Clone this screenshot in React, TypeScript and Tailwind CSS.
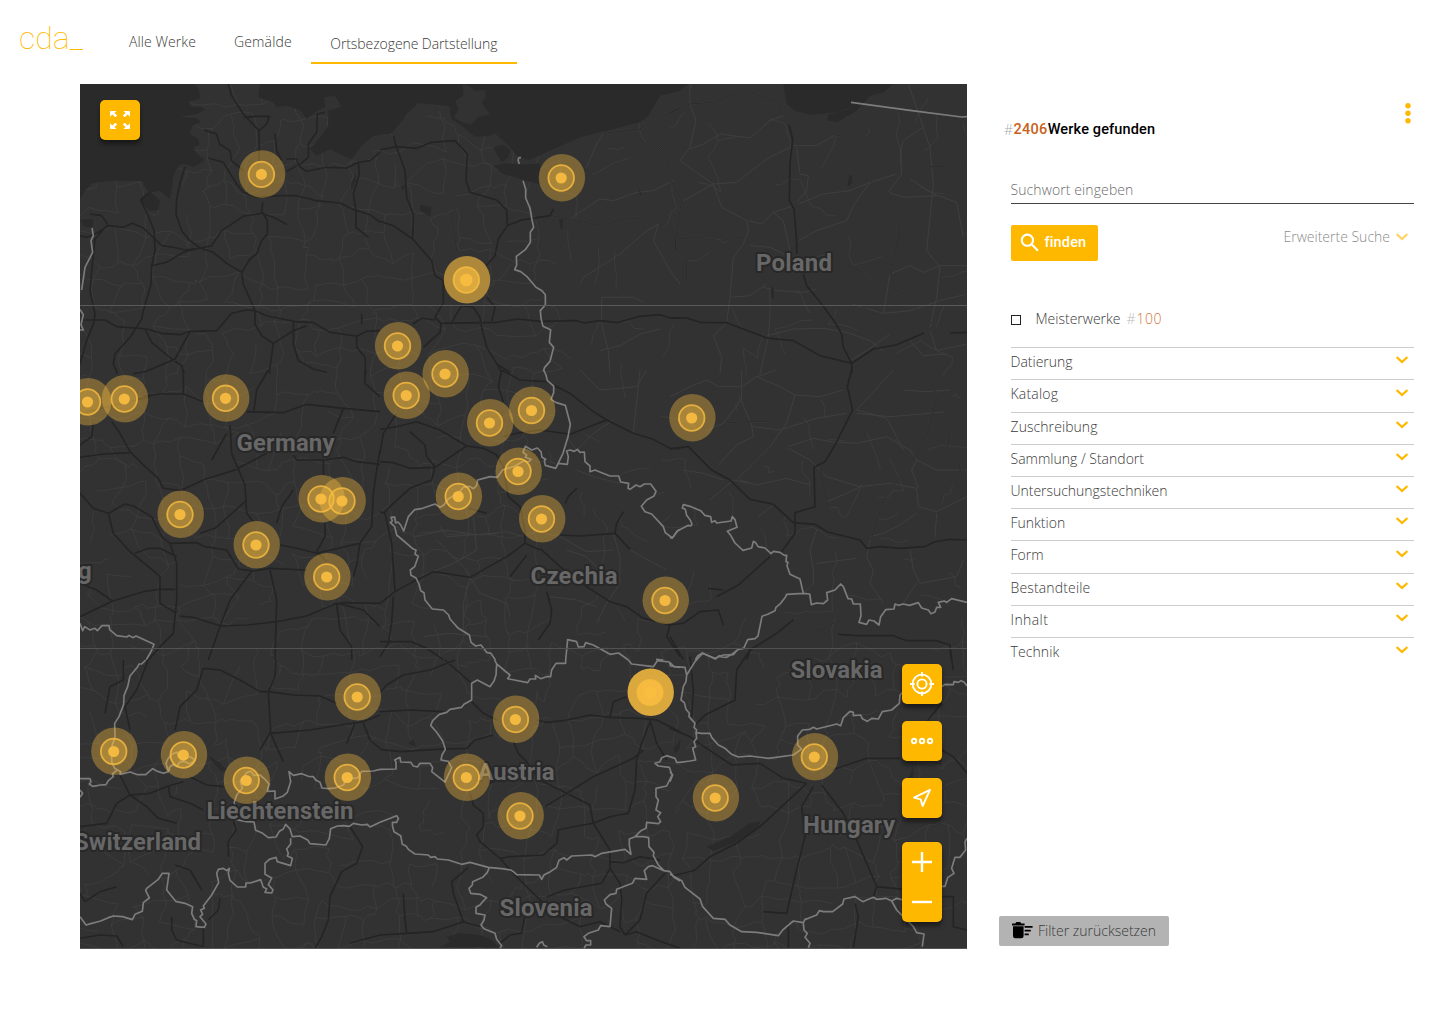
import type { ReactNode } from "react";

type Tile = { x: number; y: number; d: string };

const BORDERS: Tile[] = [
  { x: 80, y: 84, d: "M36 432L40 455 33 470 38 505 15 550 5 618M0 676L10 692 3 722 10 738 0 738" },
  { x: 380, y: 84, d: "M418 240L414 228 417 221 423 221M429 290L437 315 437 342 450 372 456 408 461 430 451 445 451 475 436 497 409 517 410 543 404 557 422 563 440 577 468 610 486 620 496 632 496 663 481 680 483 703 489 727 512 737 508 775 521 790 510 832 494 850 490 862" },
  { x: 670, y: 84, d: "M543 55L720 79 875 99 891 98" },
  { x: 80, y: 370, d: "M0 760L8 782 14 770 30 780 45 775 52 782 66 767 87 767 89 779 110 797 140 801 147 796 158 803 168 798 222 823 214 843 199 869" },
  { x: 380, y: 370, d: "M491 0L498 15 502 32 521 48 521 68 513 88 527 97 556 106 571 163 564 200 549 250 527 295 496 286 493 272 497 268 486 262 483 245 472 234 455 240 436 229 429 247 440 255 436 262 453 268 446 276 430 273 405 288 368 300 352 322 330 320 308 326 293 330 290 347 280 356 268 349 250 352 235 370 205 386 192 405 180 412 165 402 128 415 104 419 85 440 71 483 62 465 54 456 47 459 44 441 33 442 37 453 31 458 44 470 50 495 75 516 98 536 108 540 105 552 115 559 104 590 91 600 93 616 108 624 117 642 122 662 132 668 135 690 157 717 190 720 206 735 210 747 235 775 268 795 273 817 287 828 303 825 320 847 333 850 346 870M527 295L535 280 562 283 565 260 560 243 570 240 583 244 592 238 600 247 613 246 615 275 630 288 630 305 645 300 665 308 690 318 716 318 722 336 746 340 744 355 750 358 768 345 780 350 793 342 812 342 828 364 822 378 800 390 784 409 795 425 815 432 850 470 856 488 877 504 892 483 900 478M557 870L563 809 590 815 595 831 612 830 617 818 640 825 690 853 716 849 745 870M828 868L850 870" },
  { x: 670, y: 370, d: "M0 505L10 500 22 483 55 466 62 468 66 462 60 449 50 436 46 418 37 414 40 404 60 409 92 422 104 436 122 440 125 457 135 452 140 459 183 453 187 440 195 449 201 472 172 484 182 496 195 519 219 541 245 534 250 514 257 518 264 530 285 534 303 551 310 544 330 547 343 556 350 556 348 575 354 577 351 587 360 613 390 627 400 670M400 670L350 673 347 680 332 700 318 712 315 722 295 732 276 739 264 798 255 806 233 809 221 835 205 838 185 853 170 862 155 861 148 857 136 867 97 849 84 857 76 869M400 670L419 672 424 704 440 699 460 701 473 690 470 668 495 660 512 642 520 650 534 686 545 687 550 702 571 702 573 737 567 757 590 763 597 750 612 753 627 765 632 740 647 719 672 717 675 702 685 706 700 702 718 706 745 698 755 714 775 720 783 731 795 726 800 712 812 712 805 697 823 693 830 697 845 686 891 697" },
  { x: 80, y: 660, d: "M197 0L185 12 177 12 172 22 150 48 143 80 132 107 131 133 117 170 104 190 105 230 95 262 95 305 104 325 122 335 120 343 130 341 150 336 173 344 197 344 218 326 235 335 250 340 265 335 258 310 264 296 275 283 292 276 295 290 310 300 330 290 345 300 330 312 315 305 300 305 290 320 280 312 268 322 268 333M0 356L30 356 33 366 28 372 38 379 62 375 78 374 85 362 100 350 97 342 110 331M0 390L8 400 0 412M462 430L470 405 487 385 481 362 500 338 512 334 522 346 540 345 555 358 567 372 562 394 585 393 585 417 608 409 622 397 632 365 627 335 640 346 665 341 685 349 700 350 707 360 720 367 726 384 745 386 765 384 790 375 800 357 833 354 845 334 880 333 900 328M462 430L470 445 465 478 500 485 522 486 527 511 545 518 565 533 588 531 598 514 610 507 617 493 630 507 637 530 660 528 683 540 690 551 738 555 748 535 752 506 772 498 790 497 808 499 820 490 845 495 862 493 870 501 900 487M632 535L632 552 620 567 625 580 622 588 637 595 632 617 592 605 588 592 568 598 555 610 555 643 575 654 565 674 579 690 575 699 555 697 560 686 550 682 542 659 512 669 498 669 497 681 472 681 450 661 445 640 448 625 440 632 430 625 415 628 410 640 416 668 395 705 370 738 373 745 362 750 368 763 360 770 378 792 373 802 348 800 350 782 343 778 335 760 338 740 315 730 287 724 260 690 267 640 247 640 235 658 200 685 197 692 208 714 190 728 187 754 165 763 157 779 128 770 100 768 85 773 62 783 35 790 18 795 0 770" },
  { x: 380, y: 660, d: "M0 328L48 327 48 305 44 300 60 292 62 306 92 307 100 318 112 321 120 310 150 310 158 323 155 335 195 366 215 323 205 304 183 300 186 285 196 268 188 243 170 217 152 196 158 182 178 163 200 157 210 148 245 142 252 133 275 120 275 70 292 60 330 80 342 63 348 45 350 12 390 45 383 56 443 68 450 57 467 57 466 46 482 56 500 50 512 50 515 30 528 10 557 10 557 0M344 0L350 12M745 0L755 12 820 20 832 2 868 6 872 18 900 22M0 487L50 467 55 475 50 487 37 487 38 500 42 515 62 527 67 553 78 558 85 568 105 582 145 585 152 592 165 590 172 597 205 600 245 613 270 607 325 622 365 626 392 630 400 635 410 644 478 645 485 658 492 645 508 637 530 622 537 601 552 593 560 600 575 588 635 585 645 590 665 580 735 568 753 583 748 556 748 537 765 530 783 512 798 505 800 487 835 491 842 485 833 470 842 458 828 450 835 420 828 410 828 385 860 378 876 345 868 322 835 318 825 310 840 305 845 293 860 287 885 295 890 307 900 307M765 530L790 530 806 533 807 560 822 577 820 587 835 615 852 632 870 635 882 652 900 663M328 622L322 637 308 652 278 665 277 675 267 685 272 700 300 703 320 713 308 725 300 735 288 742 288 760 315 765 312 780 303 795 312 806 345 820 350 838 365 857 360 865M852 632L818 617 805 620 793 632 800 658 765 655 757 670 710 688 708 700 690 704 673 720 678 732 695 745 690 800 662 797 655 810 625 820 612 830 620 842 632 842 632 855 618 855 612 865M470 862L478 850 487 845 492 856 502 860" },
  { x: 670, y: 650, d: "M0 38L12 50 45 52 50 75 48 95 40 110 33 150 43 158 48 178 58 190 57 200 75 220 72 232 80 240 78 248 95 250 120 250 125 262 145 285 165 295 185 313 205 321 240 318 295 325 370 315 395 297 383 285 383 258 397 240 420 238 430 232 440 237 500 222 512 227 520 203 540 184 550 187 550 197 572 195 577 206 592 214 605 205 625 207 637 185 665 180 688 160 690 135 705 120 740 118M50 75L75 35 97 10 135 25 160 15 190 14 202 0M815 110L825 103 850 104 852 95 865 97 873 92 883 97 891 108M78 248L80 265 72 275 77 290 68 295 77 330 60 333 30 337M0 365L8 375 0 395M0 673L35 692 45 712 90 747 98 770 130 805 165 808 180 825 215 845 260 847 325 857 340 838 370 813 400 818 405 808 415 805 440 795 448 782 460 785 488 785 518 762 522 747 555 740 578 755 610 742 620 748 648 745 665 753 680 745 700 750M665 753L680 780 700 800 730 830 740 848 762 852 757 890M400 818L402 840 412 850 405 862 420 880 415 893M815 709L825 709 833 683 852 670 845 655 855 622 870 622 887 600 885 575 891 565" },
];

const WATER: Tile[] = [
  { x: 80, y: 84, d: "M0 0L345 0 358 20 360 42 325 55 335 70 365 68 375 78 350 90 300 98 350 103 362 115 335 125 330 150 355 165 358 182 340 190 350 210 375 228 340 250 315 240 298 242 280 275 275 320 270 345 240 320 215 325 240 350 235 378 210 380 185 360 180 345 205 325 185 290 90 290 35 298 15 320 0 345ZM540 0L535 40 580 55 590 70 620 65 660 78 680 105 700 90 712 80 735 70 732 40 765 35 785 68 745 80 745 125 720 160 690 195 710 215 750 195 790 215 815 225 850 180 880 155 902 153L902 0ZM0 408L40 405 38 430 15 430ZM812 300L828 268 828 290 815 318Z" },
  { x: 380, y: 84, d: "M0 0L900 0 900 20 840 35 805 95 780 115 700 135 600 160 500 205 450 228 415 218 380 180 345 148 330 155 285 158 250 130 215 105 205 65 115 58 85 85 70 105 35 148 0 152ZM340 245L375 238 420 242 480 238 480 300 440 290 370 270ZM340 190L370 182 390 195 385 220 365 235 350 210ZM120 362L155 370 150 400 120 378ZM538 405L550 405 547 438 540 430ZM62 310L75 300 70 320ZM775 310L785 332 780 332Z" },
  { x: 670, y: 84, d: "M340 0L610 0 580 40 545 70 500 85 420 92 375 80 350 60ZM0 0L55 0 30 18 0 22ZM590 0L670 0 640 25 600 35 560 80 500 115 472 108 475 92 540 75ZM538 275L545 272 547 295 532 310ZM303 605L312 615 312 645 303 640Z" },
  { x: 670, y: 650, d: "M108 590L140 578 180 560 240 520 270 515 265 535 200 575 130 603ZM10 295L32 272 20 310ZM712 390L730 350 730 385Z" },
  { x: 380, y: 660, d: "M200 830L240 820 300 825 335 840 355 862 180 862 210 845ZM85 250L100 238 108 262ZM880 280L900 240 900 265Z" },
  { x: 80, y: 660, d: "M385 285L420 310 440 330 425 335 400 310Z" },
];

const ISLANDS: Tile[] = [
  { x: 380, y: 84, d: "M248 0L265 5 285 20 315 18 318 40 305 55 330 92 295 98 272 122 240 112 222 100 235 75 225 50 250 35ZM85 85L115 62 205 66 215 80 180 78 130 98 85 118Z" },
];

const ROADS: Tile[] = [
  { x: 80, y: 84, d: "M445 0L455 35 490 90 537 140 538 200 535 260M492 100L530 97 568 97 560 120 537 140M0 455L20 460 50 448 85 425 130 430 157 418 190 432 225 465 245 485 280 490 315 498 360 492 395 485 425 440 490 397 545 388 548 355M30 390L65 395 85 425M205 328L182 348 202 388 222 440 225 500 215 545 213 600 190 680 185 705 150 760 105 810 100 840 112 869M315 248L302 290 290 345 288 390 305 440 330 470 360 492 400 505 440 538 485 565 510 525 530 510 545 470 562 450 562 410 548 385M215 545L260 535 310 505 360 492M485 565L490 600 510 645 525 680 525 720 545 755 580 778 570 850 568 869M80 425L45 465 35 560 30 620 45 690 42 715 20 770 0 840M10 708L75 708 110 728 200 735 245 748 300 752 330 742 410 740 455 688 500 678 525 680 560 695 640 712 700 716 750 745 830 757 860 742 900 740M195 735L215 775 275 825 305 845 312 869M330 742L285 825 200 862 160 869M372 138L410 150 418 180 450 200 455 230 490 260M385 222L430 235 470 300 490 325 530 340 600 335 650 335 710 350 780 357 825 378 870 392 900 415M618 225L650 225 655 245 680 262 740 250 800 252 835 235 870 230 900 205M655 245L685 220 685 180 710 145 712 90 735 85M835 235L838 270 820 330 828 380 828 430 865 460M545 388L580 400 622 422M585 148L590 200 605 230M580 778L640 740 680 725M640 712L640 780 655 830 700 855 740 865M830 757L830 790 855 820 857 869M620 262L650 245M845 690L845 720" },
  { x: 380, y: 84, d: "M0 197L50 188 110 193 155 175 225 170 262 210 258 290 270 325 350 348 380 378 382 425 355 465 345 515 315 550M40 155L50 190 75 260 80 340 100 390 98 465 155 530 165 575 190 590 190 655 165 700 183 718 180 745 130 790M0 412L40 425 98 465M382 425L425 408 510 395 520 375M98 720L125 703 165 708M183 718L350 715 415 705 480 712 590 710 612 717 660 710 710 716 780 697 840 692 870 702 900 702M215 715L245 665 280 670 300 700 305 730 320 790 345 830 365 865M320 640L345 670 335 712M350 840L390 865" },
  { x: 670, y: 84, d: "M357 122L368 165 360 240 358 350 372 375 380 470 380 510M400 570L410 605 455 660 495 715 515 750 520 790 545 838 545 869M0 702L50 702 90 715 170 716 290 762 370 770 450 815 545 838 610 795 680 782 762 747M840 747L891 745" },
  { x: 80, y: 370, d: "M0 262L70 252 150 248M0 225L35 200 40 160M95 155L120 190 150 245 195 290 235 325 250 355 300 362 375 328 465 300 560 250M440 190L395 270M190 78L240 72 310 72 370 95M310 0L310 72M565 0L530 60 522 120M450 165L455 250 495 345 500 430 520 455M500 125L610 128 680 103 790 115 900 125M790 115L760 190M640 255L650 270 730 270 790 262 830 275 900 283M730 270L730 315M495 395L450 435 405 475 360 490M0 370L40 415 85 430 135 402 160 408 215 440 245 500 270 520 350 518 375 530 440 540 475 597 520 603 570 595 680 600M85 430L100 490 150 545 205 590 240 620 240 700 290 730M270 520L290 580 290 690 280 790 250 820 205 870M290 560L240 535 205 535 165 550M515 603L450 690 422 765 385 870M300 738L340 742 422 768 500 765 590 755 680 738 770 700M570 600L590 690 585 870M770 700L780 780 815 830 815 870M770 700L850 720 900 770M780 698L900 700M600 525L650 535 710 550 840 520M735 460L735 500 710 545 740 575M820 620L830 585 840 520 875 470 880 370 890 300 900 240M0 740L100 692 190 665 240 658 285 658M0 640L50 660 100 695M640 360L605 410 590 460M855 0L855 40 900 80M210 80L0 130" },
  { x: 380, y: 370, d: "M0 178L50 170 110 155 180 180 260 228 310 235 350 255 370 290M0 275L40 278 90 295 165 292M90 185L135 225 140 260 165 290 155 330 90 355 40 400 10 430M165 292L260 228M370 290L385 380 420 410 435 480 435 520 480 540M370 200L410 190 480 180 570 193 680 150M365 0L355 50 370 95M365 0L420 30 500 35 570 70 640 125 680 150 760 190 820 208 870 235 900 235M540 495L600 498 705 490 750 538M705 490L710 460 730 425M555 400L565 380 590 355M480 535L540 590 620 650 690 695 740 710 790 745 870 765 860 800 900 860M435 520L380 560 270 622 160 605 100 635 45 665 0 700M45 665L35 520 15 430 0 425M40 680L35 760 25 820M0 815L95 815 140 835 190 869M25 820L0 860M440 555L390 620M500 665L515 720 510 760 475 810M265 415L320 430M50 130L10 190 0 250" },
  { x: 670, y: 370, d: "M0 237L55 230 125 300 180 330 240 388 310 403 370 458 435 463 475 487 570 510 590 535 630 530 690 535 765 530 790 517 840 508 891 510M545 0L532 50 548 120 495 225 465 275 432 292 435 410 375 428 375 490 335 545M300 560L205 645 140 680M115 655L160 660M0 765L40 760 90 725 145 720 160 765M0 800L40 869M505 793L560 797 670 797 710 812 800 812 840 825 845 869M230 869L240 840 320 790 370 750" },
  { x: 80, y: 660, d: "M370 25L350 90 300 140 290 190 285 210M370 25L420 30 480 60 540 95 565 95 640 105 720 108 770 130M565 95L572 215 540 270M588 0L585 50 565 95M572 220L690 210 780 195 850 185 900 165M572 220L610 305M205 0L170 90 135 140 150 210M130 0L130 60 90 80 75 160M850 190L870 240 900 265M825 190L800 250M120 345L150 405 210 400 265 378 310 365M150 405L200 440 235 475 290 490M0 500L80 490 110 430 150 405M265 378L270 410 330 430 370 450M330 350L380 375 430 380M460 480L468 510 445 545 445 590M285 615L330 630 365 690M0 700L15 725 60 695 110 680M810 500L848 560 830 610 785 635 750 710 745 780 725 830 705 865M0 835L60 825 110 828 130 860M810 850L900 825M385 780L415 750 420 715M275 770L275 810 290 840 370 860M370 800L370 860" },
  { x: 380, y: 660, d: "M225 0L150 30 70 45 20 75 0 100M195 0L275 70 275 125 310 160 350 180M0 155L90 150 190 155M0 268L60 275 170 268 260 265 285 240 340 225M400 245L415 280 440 305 480 360 560 400 630 435 640 490 690 570 690 625 665 670 555 690 500 710M495 440L560 400 640 350 760 295 790 270M470 180L500 187 550 182 630 165 690 172 780 175 830 180 900 215M810 185L785 250 770 300 765 390 745 460 690 470 640 490 580 500 535 510 530 550 490 585 390 590 360 595 300 545 290 525 310 500 310 460 280 435 270 400M360 595L390 630 470 710 520 760 600 800 660 785 720 815M690 172L700 125 740 110M690 625L720 670 725 720 720 800 735 825M690 605L730 608 780 590 840 600M735 825L780 780 800 700 855 640M265 622L215 665 220 700 250 785 300 800M0 825L80 820 160 815 250 785M70 700L75 780 80 820M360 850L390 825 425 820 435 765M330 370L370 350 395 320M735 825L770 815 830 840 900 865M810 180L830 250 860 300" },
  { x: 670, y: 650, d: "M80 275L185 345 270 340 340 385 410 400M410 400L270 530 200 580 120 620 75 660 20 675 0 680M430 410L395 470 405 560 375 680 350 790 280 785M455 405L520 490 560 570 620 710 700 718M620 710L610 740M485 360L590 325 690 325M240 0L200 60 195 150 105 195 75 225M60 20L70 120 65 200M815 300L850 320 891 370M815 740L850 740 850 830 891 840M770 215L815 160M840 0L850 60M0 235L60 260 80 275M555 760L565 800 550 893M355 820L355 893" },
];

const LANES: Tile[] = [
  { x: 380, y: 84, d: "M515 395L580 408 660 425 720 410 780 400 840 420 880 440 890 500M780 135L860 215 870 270 895 300M670 148L780 135 900 72M495 410L540 485 570 550 600 600 650 635M250 335L215 390 230 500" },
  { x: 670, y: 84, d: "M0 85L60 60 130 55 220 20 270 35 330 55 330 90M360 75L362 95 450 140 510 155 545 180 570 250 600 290 655 325 685 390 690 440 660 560 680 625 790 722M510 155L580 100 710 5M0 285L35 350 20 440 15 490 50 530 50 590 25 660M20 465L110 458 220 460M470 615L520 630 560 655 615 693M520 538L580 565 630 612M710 280L760 250 850 245 891 220M790 750L830 720 890 630" },
  { x: 670, y: 370, d: "M825 120L840 180 832 235 865 270 880 350M770 0L800 80 770 200 730 270 640 390 605 500M170 158L240 155 300 155M450 290L460 340 470 400M375 740L430 785 470 770 530 740" },
];

const MINOR: Tile[] = [
  { x: 380, y: 84, d: "M570 405L660 345 700 350 770 325 820 320 880 290M600 600L610 580 720 510 800 440 835 420M835 420L820 470 870 560 900 600M665 640L665 720 685 800 690 869M665 640L760 640 790 655M660 800L720 785 780 750 840 735M620 250L650 180 670 150" },
  { x: 670, y: 84, d: "M60 0L60 60 78 110 60 190 30 230 130 300 200 295 290 225 360 190M60 195L100 180 150 150 240 162 300 110 340 95M130 300L155 370 230 410 235 440 220 480 190 520 180 640 170 715M40 350L130 300M385 470L440 440 530 410 550 365 600 295M385 360L460 330 540 320 600 295 680 270M715 0L760 130 780 190 790 300 770 500 810 550 800 640 780 730M690 205L700 170 760 130M690 205L695 270 655 325 700 340 800 335M720 285L790 330 860 355 880 460M370 185L440 185 500 150M380 190L390 270 415 275 410 320 380 355M235 410L275 420 310 385 370 365M310 385L340 410 360 500M280 610L320 620 400 625 440 615M300 610L300 700 295 760 270 869M180 640L240 635 290 600M545 660L640 688 720 680 810 650 891 630M640 690L660 570 720 545 760 565 810 545 891 545M240 485L300 490 350 515M170 716L130 755 155 820 150 869M290 755L370 735 460 733 530 745 600 770 640 800M540 830L590 800 660 750M780 740L800 800 891 780M720 770L760 815 830 810" },
  { x: 670, y: 370, d: "M0 80L60 50 110 30 145 50 215 50 260 20 320 0M215 0L215 90 160 160 110 180M215 95L245 165 250 200 200 225 145 285M260 20L330 50 375 75 450 80 520 60M375 75L350 160 300 230 200 330M250 170L330 180 440 145 530 130M355 230L430 205 480 215 560 220 650 200 720 240 740 270M560 120L650 145 700 240M560 120L670 0M560 130L660 140 780 130 830 125M355 235L420 270 470 320 570 350 660 340 740 355 745 410 800 425 891 380M570 350L530 370 470 395M740 270L725 300 745 355M740 270L800 300 891 300M700 60L770 65 840 60M210 330L260 345 350 325 420 345M40 300L100 310 160 330M265 440L310 405M120 390L190 330 240 340M600 510L590 560 610 600 600 640 640 700M720 540L730 600 750 640 860 620 880 570M740 640L700 700M800 430L795 500M440 480L420 540 430 600 430 640 400 670M440 580L520 570 560 565M600 500L640 490 690 465 740 430" },
  { x: 380, y: 370, d: "M560 200L590 240 640 190 700 150M600 0L660 60 770 50 800 0M780 0L760 190M590 300L640 320 720 340M110 500L190 480 300 495 380 485 430 500M180 470L200 500 350 490M170 510L260 600 270 622M270 622L250 700 250 780M270 622L300 670 380 700 390 740M540 500L620 545 700 540M700 490L720 560 720 640 680 700 650 760M750 540L860 600M560 540L620 560 700 640M120 620L220 580 290 540 280 440M510 680L590 690 650 710M130 800L210 790 320 800" },
];

const MARKERS: [number, number, number][] = [
  [261.4, 174.4, 0.37], [561.2, 178, 0.37], [397.5, 346, 0.37], [445, 374, 0.37], [406.2, 395.5, 0.37],
  [531.5, 410.5, 0.37], [489.5, 423, 0.37], [518, 471.5, 0.37], [458.2, 496.5, 0.37], [541.5, 519, 0.37],
  [665, 600.5, 0.37], [691.7, 418, 0.37], [87.5, 402, 0.37], [124.3, 399, 0.37], [225.5, 398.3, 0.37],
  [180, 514.5, 0.37], [256, 545, 0.37], [321, 499, 0.37], [342, 501, 0.37], [326.7, 577, 0.37],
  [357.2, 697, 0.37], [113.7, 751.5, 0.37], [183.3, 755, 0.37], [246.2, 780.5, 0.37], [347.2, 777.5, 0.37],
  [515.4, 719.5, 0.37], [466.3, 777.5, 0.37], [520, 816, 0.37], [814.3, 757, 0.37], [715.2, 798, 0.37],
  [466.3, 280, 0.62], [650, 692.5, 0.85],
];

const LABELS: [string, number, number, number][] = [
  ["Poland", 756, 271, 76], ["Germany", 236.5, 451, 98], ["Czechia", 530.5, 584, 87], ["Slovakia", 790.5, 678, 92],
  ["Austria", 477.5, 779.5, 77], ["Liechtenstein", 206.5, 819, 147], ["Switzerland", 74, 850, 127],
  ["Hungary", 803, 832.5, 92], ["Slovenia", 499.5, 916, 93], ["g", 78, 578.5, 13.5],
];

/* Deterministic mesh of country lanes that fills the space between the highways. */
function laneMesh() {
  let seed = 7;
  const rnd = () => {
    seed = (seed * 16807) % 2147483647;
    return seed / 2147483647;
  };
  const step = 23;
  const cols = 41;
  const rows = 40;
  const pts = Array.from({ length: rows }, (_, j) =>
    Array.from({ length: cols }, (_, i) => [70 + i * step + (rnd() - 0.5) * 19, 74 + j * step + (rnd() - 0.5) * 19]),
  );
  let d = "";
  const link = (a: number[], b: number[]) => {
    const sparse = a[0] > 545 && a[1] < 640;
    if (rnd() < (sparse ? 0.86 : 0.32)) return;
    d += `M${a[0].toFixed(1)} ${a[1].toFixed(1)}`;
    for (const t of [0.3, 0.65]) {
      const x = a[0] + (b[0] - a[0]) * t + (rnd() - 0.5) * 6;
      const y = a[1] + (b[1] - a[1]) * t + (rnd() - 0.5) * 6;
      d += `L${x.toFixed(1)} ${y.toFixed(1)}`;
    }
    d += `L${b[0].toFixed(1)} ${b[1].toFixed(1)}`;
  };
  for (let j = 0; j < rows - 1; j++)
    for (let i = 0; i < cols - 1; i++) {
      link(pts[j][i], pts[j][i + 1]);
      link(pts[j][i], pts[j + 1][i]);
    }
  return d;
}
const MESH = laneMesh();

function Layer({ tiles, ...rest }: { tiles: Tile[]; stroke?: string; strokeWidth?: number; fill?: string }) {
  return (
    <g strokeLinejoin="round" {...rest}>
      {tiles.map((t, i) => (
        <path key={i} d={t.d} transform={`translate(${t.x} ${t.y}) scale(.33333)`} />
      ))}
    </g>
  );
}

function MapCanvas() {
  return (
    <svg viewBox="80 84 887 865" className="block h-full w-full">
      <rect x="80" y="84" width="887" height="865" fill="#323232" />
      <path d={MESH} fill="none" stroke="#3d3d3d" strokeWidth="0.85" strokeLinejoin="round" />
      <Layer tiles={MINOR} fill="none" stroke="#3f3f3f" strokeWidth={2.8} />
      <Layer tiles={WATER} fill="#2a2a2a" />
      <Layer tiles={ISLANDS} fill="#323232" />
      <Layer tiles={LANES} fill="none" stroke="#3e3e3e" strokeWidth={4.5} />
      <Layer tiles={LANES} fill="none" stroke="#262626" strokeWidth={2.4} />
      <Layer tiles={ROADS} fill="none" stroke="#242424" strokeWidth={4.8} />
      <Layer tiles={BORDERS} fill="none" stroke="#7c7c7c" strokeWidth={5} />
      <path d="M80 305.5H967" stroke="#5a5a5a" />
      <path d="M80 648.5H967" stroke="#525252" />
      <g className="font-['Roboto',sans-serif] text-[24px] font-bold" fill="#676767" stroke="#282828" strokeWidth="4" strokeLinejoin="round" paintOrder="stroke">
        {LABELS.map(([t, x, y, w]) => (
          <text key={t} x={x} y={y} textLength={w}>{t}</text>
        ))}
      </g>
      {MARKERS.map(([x, y, o], i) => (
        <g key={i} fill="#f9bd40">
          <ellipse cx={x + 0.7} cy={y - 0.3} rx="23.2" ry="23.8" opacity={o} />
          <circle cx={x} cy={y} r="13" opacity={o} />
          <circle cx={x} cy={y} r="12.8" fill="none" stroke="#f9bd40" strokeWidth="1.8" opacity={o > 0.8 ? 0.5 : 0.8} />
          <circle cx={x} cy={y} r={o > 0.5 ? 6.3 : 5.6} opacity="0.92" />
        </g>
      ))}
      <path d="M80 948.7H967" stroke="#707070" strokeWidth="0.7" />
    </svg>
  );
}

function MapButton({ label, children }: { label: string; children: ReactNode }) {
  return (
    <button aria-label={label} className="flex size-10 items-center justify-center rounded-[5px] bg-[#ffb800] shadow-[0_4px_4px_rgba(0,0,0,0.45)]">
      {children}
    </button>
  );
}

function Chevron() {
  return (
    <svg viewBox="0 0 12 8" className="h-2 w-3 shrink-0">
      <path d="M0.6 1L6 6.1 11.4 1" fill="none" stroke="#ffb800" strokeWidth="2.2" />
    </svg>
  );
}

const FILTERS: [string, string][] = [
  ["Datierung", ""], ["Katalog", "tracking-[0.2px]"], ["Zuschreibung", "tracking-[0.07px]"], ["Sammlung / Standort", ""],
  ["Untersuchungstechniken", "tracking-[-0.03px]"], ["Funktion", ""], ["Form", ""], ["Bestandteile", "tracking-[0.15px]"],
  ["Inhalt", "tracking-[0.4px]"], ["Technik", "tracking-[0.1px]"],
];

export default function App() {
  return (
    <div className="flex h-[1024px] w-[1440px] flex-col overflow-hidden bg-white font-['Open_Sans',sans-serif] text-[14px] leading-5 font-light text-[#3a3a3a]">
      <header className="flex h-[84px] items-start">
        <div className="mt-[18px] ml-[19px] w-[93px] font-['Roboto',sans-serif] text-[32px] leading-10 font-thin text-[#ffb800]">cda_</div>
        <nav className="flex items-start">
          <a className="mt-8 ml-[17px] tracking-[0.08px]">Alle Werke</a>
          <a className="mt-8 ml-[38px] tracking-[0.15px]">Gemälde</a>
          <a className="ml-[19px] flex h-[64px] w-[206px] justify-center border-b-2 border-[#ffb800] pt-[34px] tracking-[-0.08px]">Ortsbezogene Dartstellung</a>
        </nav>
      </header>

      <main className="flex">
        <section className="relative ml-20 h-[865px] w-[887px] overflow-hidden">
          <MapCanvas />
          <div className="absolute top-4 left-5">
            <MapButton label="Vollbild">
              <svg viewBox="0 0 20 20" className="size-5" fill="#fff">
                <path d="M0 1h6.4L4.5 2.9 7.2 5.6 5.4 7.2 2.3 4.6 0 6.8z" />
                <path d="M20 1h-6.4l1.9 1.9-2.7 2.7 1.8 1.6 3.1-2.6L20 6.8z" />
                <path d="M0 19h6.4l-1.9-1.9 2.7-2.7-1.8-1.6-3.1 2.6L0 13.2z" />
                <path d="M20 19h-6.4l1.9-1.9-2.7-2.7 1.8-1.6 3.1 2.6 2.3-2.2z" />
              </svg>
            </MapButton>
          </div>
          <div className="absolute right-[25px] bottom-[27px] flex flex-col gap-[17px]">
            <MapButton label="Zentrieren">
              <svg viewBox="0 0 26 26" className="size-[26px]" fill="none" stroke="#fff" strokeWidth="1.9">
                <circle cx="13" cy="13" r="9.4" />
                <circle cx="13" cy="13" r="4.6" />
                <path d="M13 1v4.6M13 20.4V25M1 13h4.6M20.4 13H25" />
              </svg>
            </MapButton>
            <MapButton label="Mehr">
              <svg viewBox="0 0 24 8" className="h-2 w-6" fill="none" stroke="#fff" strokeWidth="1.9">
                <circle cx="4" cy="4" r="2.2" />
                <circle cx="12" cy="4" r="2.2" />
                <circle cx="20" cy="4" r="2.2" />
              </svg>
            </MapButton>
            <MapButton label="Standort">
              <svg viewBox="0 0 20 20" className="size-5" fill="none" stroke="#fff" strokeWidth="1.9" strokeLinejoin="round">
                <path d="M18 1.8L2 9.6l6.6 1.8 2 6.6z" />
              </svg>
            </MapButton>
            <div className="mt-[7px] flex h-20 w-10 flex-col items-center rounded-[5px] bg-[#ffb800] shadow-[0_4px_4px_rgba(0,0,0,0.45)]">
              <button aria-label="Vergrößern" className="flex size-10 items-center justify-center">
                <svg viewBox="0 0 20 20" className="size-5" stroke="#fff" strokeWidth="2.4"><path d="M0 10h20M10 0v20" /></svg>
              </button>
              <button aria-label="Verkleinern" className="flex size-10 items-center justify-center">
                <svg viewBox="0 0 20 20" className="size-5" stroke="#fff" strokeWidth="2.4"><path d="M0 10h20" /></svg>
              </button>
            </div>
          </div>
        </section>

        <aside className="ml-8 flex h-[865px] w-[415px] flex-col">
          <div className="flex h-[96px] items-start justify-between">
            <h1 className="mt-9 ml-[5px] flex font-['Roboto',sans-serif] text-[14.5px] font-medium text-black">
              <span className="w-[9.5px] font-['Open_Sans'] text-[14px] font-light text-[#aaa]">#</span>
              <span className="tracking-[0.3px] text-[#c8611a]">2406</span>
              <span className="tracking-[0.15px]">Werke gefunden</span>
            </h1>
            <svg viewBox="0 0 6 22" className="mt-[18px] mr-[3px] h-[22px] w-1.5" fill="#ffb800">
              <circle cx="3" cy="3.8" r="2.7" />
              <circle cx="3" cy="11.3" r="2.7" />
              <circle cx="3" cy="18.8" r="2.7" />
            </svg>
          </div>

          <div className="ml-[11.5px]">
            <div className="h-[24px] border-b border-[#444] tracking-[0.1px] text-[#6b6b6b]">Suchwort eingeben</div>
            <div className="mt-[21px] flex items-start justify-between">
              <button className="flex h-9 w-[87px] items-center rounded-[2px] bg-[#ffb800] pl-[9px] text-white">
                <svg viewBox="0 0 20 20" className="size-5" fill="none" stroke="#fff" strokeWidth="2.1">
                  <circle cx="7.4" cy="7.2" r="5.6" />
                  <path d="M11.6 11.3L18 17.8" />
                </svg>
                <span className="ml-[5px] font-['Roboto',sans-serif] text-[14.5px] font-medium tracking-[0.15px]">finden</span>
              </button>
              <div className="mt-[2px] mr-[6px] flex items-center gap-[6px] opacity-60">
                <span>Erweiterte Suche</span>
                <Chevron />
              </div>
            </div>

            <div className="mt-[48px] flex h-5 items-center">
              <span className="mt-px size-[10px] border border-[#222]" />
              <span className="ml-[15px]">Meisterwerke</span>
              <span className="ml-[6px] tracking-[0.8px] text-[#bbb]">#</span>
              <span className="tracking-[0.6px] text-[#d0743a]">100</span>
            </div>

            <ul className="mt-[18.2px]">
              {FILTERS.map(([name, track]) => (
                <li key={name} className="flex h-[32.2px] items-start justify-between border-t border-[#cdcdcd] pr-[6px]">
                  <span className={`mt-[4px] ${track}`}>{name}</span>
                  <span className="mt-[8.3px] flex"><Chevron /></span>
                </li>
              ))}
            </ul>
          </div>

          <button className="mt-auto mb-[3px] flex h-[30px] w-[170px] items-center rounded-[2px] bg-[#b3b3b3] pl-[13px]">
            <svg viewBox="0 0 21 17" className="mb-px h-[17px] w-[21px]" fill="#000">
              <path d="M0 1.6h3.2L4.4 0h3.8l1.2 1.6h3.2v2H0z" />
              <path d="M1 4.2h10.6V14a2.2 2.2 0 0 1-2.2 2.2H3.2A2.2 2.2 0 0 1 1 14z" />
              <path d="M12.6 4.1H20.6v1.7h-8zM12.6 7.8h6.2v1.7h-6.2zM12.6 11.6h4.2v1.7h-4.2z" />
            </svg>
            <span className="ml-[5px]">Filter zurücksetzen</span>
          </button>
        </aside>
      </main>
    </div>
  );
}
